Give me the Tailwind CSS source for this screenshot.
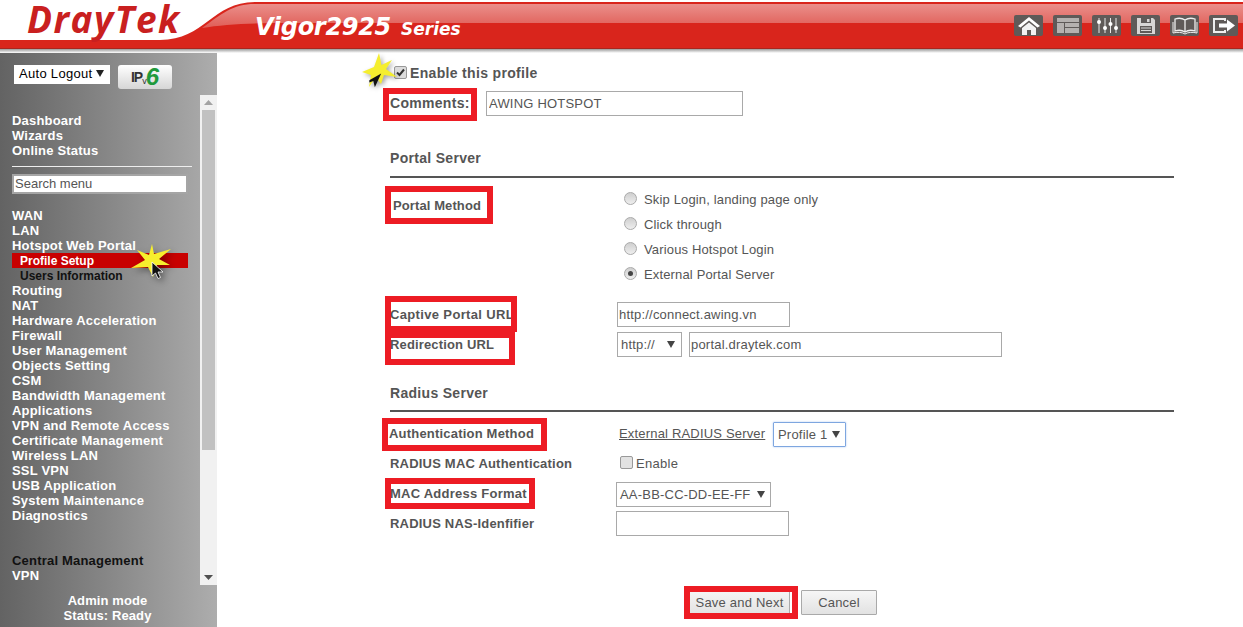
<!DOCTYPE html>
<html><head>
<meta charset="utf-8">
<title>Vigor2925 Series</title>
<script src="https://cdn.jsdelivr.net/npm/@tailwindcss/browser@4"></script>
</head>
<body class="bg-white overflow-hidden font-['Liberation_Sans',Arial,sans-serif]">
<div class="relative w-[1243px] h-[627px] overflow-hidden">

  <!-- header -->
  <header class="relative h-[53px] flex items-start">
    <svg class="absolute left-0 top-0" width="1243" height="53" viewBox="0 0 1243 53">
      <defs>
        <linearGradient id="gloss" x1="0" y1="0" x2="0" y2="1">
          <stop offset="0" stop-color="#ea8f8b"/>
          <stop offset="1" stop-color="#e05d56"/>
        </linearGradient>
        <linearGradient id="shade" x1="0" y1="0" x2="0" y2="1">
          <stop offset="0" stop-color="#9a9a9a"/>
          <stop offset="1" stop-color="#ffffff"/>
        </linearGradient>
      </defs>
      <path d="M0 40 L160 40 C205 40 212 2 255 2 L1243 2 L1243 49 L0 49 Z" fill="#d9251c"/>
      <path d="M202 28 C222 14 232 4 255 4 L1243 4 L1243 23 L290 23 C255 23 225 24 202 28 Z" fill="url(#gloss)"/>
      <rect x="0" y="48" width="1243" height="1" fill="#a8261f"/>
      <rect x="0" y="49" width="1243" height="4" fill="url(#shade)"/>
    </svg>
    <span class="relative ml-[27px] w-[156px] shrink-0 text-[37px] leading-[38px] tracking-[1.5px] font-bold italic text-[#c9201f] font-['Open_Sans',sans-serif]">DrayTek</span>
    <div class="relative ml-[72px] mt-[9px] flex items-baseline text-white font-bold italic font-['DejaVu_Sans',sans-serif]">
      <span class="text-[24px] leading-[36px] tracking-[-0.3px]">Vigor2925</span>
      <span class="ml-[10px] text-[17px] leading-[36px]">Series</span>
    </div>
    <nav class="absolute right-[5px] top-[15px] flex gap-[10px]">
      <a class="w-[29px] h-[21px] rounded-[2px] bg-[#5f5a58] flex items-center justify-center">
        <svg width="24" height="19" viewBox="0 0 24 19"><path d="M12 1 L23 10 L20.5 11.5 L12 4.5 L3.5 11.5 L1 10 Z" fill="#fff"/><path d="M5 12 L12 6.5 L19 12 V19 H14 V14 H10 V19 H5 Z" fill="#f2f2f2"/></svg>
      </a>
      <a class="w-[29px] h-[21px] rounded-[2px] bg-[#5f5a58] flex items-center justify-center">
        <svg width="24" height="17" viewBox="0 0 24 17"><path d="M1 1 H23 V5 H1 Z M1 6 H8 V16 H1 Z M9 6 H23 V10 H9 Z M9 11 H23 V16 H9 Z" fill="#b5b1af"/></svg>
      </a>
      <a class="w-[29px] h-[21px] rounded-[2px] bg-[#5f5a58] flex items-center justify-center">
        <svg width="24" height="17" viewBox="0 0 24 17" fill="#fff"><path d="M3.5 1 h1 v15 h-1 Z M9.5 1 h1 v15 h-1 Z M15 1 h1 v15 h-1 Z M20.5 1 h1 v15 h-1 Z" fill="#e8e8e8"/><circle cx="4" cy="5" r="2"/><circle cx="10" cy="11" r="2"/><circle cx="15.500" cy="7" r="2"/><circle cx="21" cy="11" r="2"/></svg>
      </a>
      <a class="w-[29px] h-[21px] rounded-[2px] bg-[#5f5a58] flex items-center justify-center">
        <svg width="20" height="18" viewBox="0 0 20 18"><path d="M1 1 H17 L19 3 V17 H1 Z" fill="#d8d6d5"/><rect x="5" y="1" width="10" height="5" fill="#5f5a58"/><rect x="11" y="2" width="2.500" height="3" fill="#d8d6d5"/><rect x="4" y="9" width="12" height="7" fill="#5f5a58"/><path d="M5 11 H15 M5 13.500 H15" stroke="#d8d6d5"/></svg>
      </a>
      <a class="w-[29px] h-[21px] rounded-[2px] bg-[#5f5a58] flex items-center justify-center">
        <svg width="26" height="18" viewBox="0 0 26 18" fill="none" stroke="#eee" stroke-width="1.300"><path d="M13 3 C10 1 6 1 3 2 V14 C6 13 10 13 13 15 C16 13 20 13 23 14 V2 C20 1 16 1 13 3 Z M13 3 V15"/><path d="M1 5 V16 C5 15 10 15 13 17 C16 15 21 15 25 16 V5" stroke-width="1"/></svg>
      </a>
      <a class="w-[29px] h-[21px] rounded-[2px] bg-[#5f5a58] flex items-center justify-center">
        <svg width="24" height="17" viewBox="0 0 24 17" fill="none"><path d="M13 4 V2 H2 V15 H13 V13" stroke="#eee" stroke-width="2"/><path d="M7 6.500 H15 V2.500 L23 8.500 L15 14.500 V10.500 H7 Z" fill="#fff"/></svg>
      </a>
    </nav>
  </header>

  <div class="flex h-[574px]">
    <!-- sidebar -->
    <aside class="w-[217px] shrink-0 flex flex-col bg-gradient-to-r from-[#636363] to-[#adadad]">
      <div class="h-[42px] flex items-start pl-[14px] pt-[12px]">
        <div class="relative w-[96px] h-[19px] bg-white text-[13px] tracking-[0.3px] leading-[18px] text-black pl-[5px]">Auto Logout
          <svg class="absolute right-[6px] top-[5px]" width="8" height="7" viewBox="0 0 8 7"><path d="M0 0 H8 L4 7 Z" fill="#222"/></svg>
        </div>
        <div class="ml-[8px] w-[54px] h-[24px] rounded-[3px] bg-gradient-to-b from-white to-[#d6d6d6] flex items-center justify-center">
          <span class="text-[14px] font-bold text-[#333] tracking-[-1px]">IP<sub class="text-[9px] font-normal">v</sub></span>
          <span class="text-[24px] leading-[24px] font-bold italic text-[#1f9a3c]">6</span>
        </div>
      </div>
      <div class="relative flex-1 min-h-0 flex">
        <div class="w-[200px] pl-[12px] pt-[18px] text-[13px] leading-[15px] font-bold text-white tracking-[0.2px]">
          <div>Dashboard</div>
          <div>Wizards</div>
          <div>Online Status</div>
          <div class="mt-[8px] w-[180px] border-t border-[#eee]"></div>
          <input class="block mt-[7px] w-[176px] h-[20px] bg-white border-[2px] border-[#a5a5a5] text-[13px] leading-[14px] pb-[2px] font-normal tracking-normal text-[#444] px-[1px] placeholder:text-[#555]" placeholder="Search menu">
          <div class="mt-[14px]">WAN</div>
          <div>LAN</div>
          <div>Hotspot Web Portal</div>
          <div class="w-[176px] h-[15px] bg-[#c80000] pl-[8px] pt-[1px] leading-[14px] text-[12px] tracking-normal">Profile Setup</div>
          <div class="h-[15px] pl-[8px] pt-[1px] leading-[14px] text-[#111] text-[12px] tracking-normal">Users Information</div>
          <div>Routing</div>
          <div>NAT</div>
          <div>Hardware Acceleration</div>
          <div>Firewall</div>
          <div>User Management</div>
          <div>Objects Setting</div>
          <div>CSM</div>
          <div>Bandwidth Management</div>
          <div>Applications</div>
          <div>VPN and Remote Access</div>
          <div>Certificate Management</div>
          <div>Wireless LAN</div>
          <div>SSL VPN</div>
          <div>USB Application</div>
          <div>System Maintenance</div>
          <div>Diagnostics</div>
          <div class="mt-[30px] text-[#111]">Central Management</div>
          <div>VPN</div>
        </div>
        <div class="w-[17px] h-full bg-[#f1f1f1] flex flex-col items-center justify-between py-[5px]">
          <svg width="9" height="5" viewBox="0 0 9 5"><path d="M0 5 L4.500 0 L9 5 Z" fill="#a3a3a3"/></svg>
          <svg width="9" height="5" viewBox="0 0 9 5"><path d="M0 0 L4.500 5 L9 0 Z" fill="#505050"/></svg>
        </div>
        <div class="absolute left-[202px] top-[15px] w-[13px] h-[340px] bg-[#c1c1c1]"></div>
      </div>
      <div class="h-[42px] pt-[8px] pr-[2px] text-center text-[13px] leading-[15px] font-bold text-white tracking-[0.1px]">
        <div>Admin mode</div>
        <div>Status: Ready</div>
      </div>
    </aside>

    <!-- form -->
    <main class="flex-1 pl-[173px] text-[13px] text-[#555]">
      <div class="w-[784px]">
        <div class="h-[35px] pt-[5px] flex items-center text-[14px] font-bold tracking-[0.33px]">
          <div class="ml-[4px] mb-[1px] w-[13px] h-[13px] rounded-[2px] border border-[#999] bg-[#dcdcdc] flex items-center justify-center">
            <svg width="11" height="11" viewBox="0 0 11 11"><path d="M2 5.500 L4.500 8 L9 2.500" fill="none" stroke="#333" stroke-width="2"/></svg>
          </div>
          <span class="ml-[3px]">Enable this profile</span>
        </div>
        <div class="h-[30px] flex items-center">
          <span class="w-[96px] text-[14px] font-bold tracking-[0.3px]">Comments:</span>
          <input class="w-[257px] h-[25px] border border-[#a9a9a9] text-[13px] tracking-[0.2px] text-[#555] px-[2px]" value="AWING HOTSPOT">
        </div>

        <h3 class="mt-[25px] h-[30px] leading-[30px] text-[14px] font-bold tracking-[0.3px]">Portal Server</h3>
        <div class="mt-[3px] h-[2px] bg-[#555]"></div>

        <div class="mt-[9px] flex font-bold">
          <div class="w-[227px] h-[38px] pl-[3px] leading-[38px] tracking-[0.1px]">Portal Method</div>
          <div class="font-normal tracking-[0.15px]">
            <div class="h-[25px] flex items-center ml-[7px]"><span class="mb-[2px] w-[13px] h-[13px] rounded-full border border-[#aaa] bg-gradient-to-b from-[#cfcfcf] to-[#eee]"></span><span class="ml-[7px]">Skip Login, landing page only</span></div>
            <div class="h-[25px] flex items-center ml-[7px]"><span class="mb-[2px] w-[13px] h-[13px] rounded-full border border-[#aaa] bg-gradient-to-b from-[#cfcfcf] to-[#eee]"></span><span class="ml-[7px]">Click through</span></div>
            <div class="h-[25px] flex items-center ml-[7px]"><span class="mb-[2px] w-[13px] h-[13px] rounded-full border border-[#aaa] bg-gradient-to-b from-[#cfcfcf] to-[#eee]"></span><span class="ml-[7px]">Various Hotspot Login</span></div>
            <div class="h-[25px] flex items-center ml-[7px]"><span class="mb-[2px] w-[13px] h-[13px] rounded-full border border-[#aaa] bg-gradient-to-b from-[#cfcfcf] to-[#eee] flex items-center justify-center"><span class="w-[5px] h-[5px] rounded-full bg-[#444]"></span></span><span class="ml-[7px]">External Portal Server</span></div>
          </div>
        </div>

        <div class="mt-[12px] h-[30px] flex items-center">
          <span class="w-[227px] pt-[1px] font-bold tracking-[0.35px]">Captive Portal URL</span>
          <input class="w-[173px] h-[25px] border border-[#a9a9a9] text-[13px] tracking-[0.2px] text-[#555] px-[1px]" value="http://connect.awing.vn">
        </div>
        <div class="h-[30px] flex items-center">
          <span class="w-[227px] pt-[1px] font-bold tracking-[0.15px]">Redirection URL</span>
          <div class="relative w-[65px] h-[25px] border border-[#a9a9a9] text-[13px] tracking-[0.2px] leading-[23px] pl-[3px]">http://
            <svg class="absolute right-[6px] top-[8px]" width="8" height="7" viewBox="0 0 8 7"><path d="M0 0 H8 L4 7 Z" fill="#444"/></svg>
          </div>
          <input class="ml-[7px] w-[313px] h-[25px] border border-[#a9a9a9] text-[13px] tracking-[0.2px] text-[#555] px-[1px]" value="portal.draytek.com">
        </div>

        <h3 class="mt-[19px] h-[30px] leading-[30px] text-[14px] font-bold tracking-[0.3px]">Radius Server</h3>
        <div class="mt-[2px] h-[2px] bg-[#555]"></div>

        <div class="mt-[7px] h-[30px] flex items-center">
          <span class="w-[229px] -ml-[1px] mr-[1px] font-bold tracking-[0.2px]">Authentication Method</span>
          <a class="w-[146px] underline tracking-[0.18px] whitespace-nowrap">External RADIUS Server</a>
          <div class="relative ml-[8px] w-[73px] h-[25px] rounded-[1px] border border-[#7ea6e0] shadow-[0_0_2px_#a9c4ee] tracking-[0.2px] leading-[23px] pl-[4px]">Profile 1
            <svg class="absolute right-[5px] top-[8px]" width="8" height="7" viewBox="0 0 8 7"><path d="M0 0 H8 L4 7 Z" fill="#444"/></svg>
          </div>
        </div>
        <div class="h-[30px] flex items-center">
          <span class="w-[230px] font-bold tracking-[0.2px]">RADIUS MAC Authentication</span>
          <span class="mb-[3px] w-[13px] h-[13px] rounded-[2px] border border-[#999] bg-[#e2e2e2]"></span>
          <span class="ml-[3px] mb-[1px] tracking-[0.3px]">Enable</span>
        </div>
        <div class="h-[30px] flex items-center">
          <span class="w-[226px] font-bold tracking-[0.25px]">MAC Address Format</span>
          <div class="relative w-[155px] h-[25px] border border-[#a9a9a9] tracking-[0.2px] leading-[23px] pl-[3px]">AA-BB-CC-DD-EE-FF
            <svg class="absolute right-[5px] top-[8px]" width="8" height="7" viewBox="0 0 8 7"><path d="M0 0 H8 L4 7 Z" fill="#444"/></svg>
          </div>
        </div>
        <div class="h-[30px] flex items-center">
          <span class="w-[226px] font-bold tracking-[0.2px]">RADIUS NAS-Idenfifier</span>
          <input class="mb-[1px] w-[173px] h-[25px] border border-[#a9a9a9]">
        </div>

        <div class="mt-[51px] flex pl-[300px] tracking-[0.2px]">
          <button class="w-[100px] h-[25px] bg-gradient-to-b from-[#f6f6f6] to-[#e2e2e2] text-[#555] border-r border-[#aaa]">Save and Next</button>
          <button class="ml-[11px] w-[76px] h-[25px] rounded-[1px] border border-[#a9a9a9] bg-gradient-to-b from-[#f6f6f6] to-[#e2e2e2] text-[#555]">Cancel</button>
        </div>
      </div>
    </main>
  </div>

  <!-- red annotation boxes drawn on top of the screenshot -->
  <div class="absolute left-[383px] top-[88px] w-[94px] h-[33px] border-[6px] border-[#ed1c24]"></div>
  <div class="absolute left-[385px] top-[186px] w-[108px] h-[38px] border-[6px] border-[#ed1c24]"></div>
  <div class="absolute left-[385px] top-[296px] w-[132px] h-[36px] border-[6px] border-[#ed1c24]"></div>
  <div class="absolute left-[385px] top-[332px] w-[130px] h-[33px] border-[6px] border-[#ed1c24]"></div>
  <div class="absolute left-[382px] top-[418px] w-[165px] h-[33px] border-[6px] border-[#ed1c24]"></div>
  <div class="absolute left-[385px] top-[478px] w-[150px] h-[31px] border-[6px] border-[#ed1c24]"></div>
  <div class="absolute left-[684px] top-[586px] w-[114px] h-[33px] border-[6px] border-[#ed1c24]"></div>

  <!-- click markers -->
  <svg class="absolute left-[361px] top-[52px] drop-shadow-[2px_2px_2px_rgba(0,0,0,0.35)]" width="38" height="42" viewBox="0 0 38 42">
    <path d="M18 1 L20.500 13 L31 8 L25 17 L36 25 L23 23 L20 32 L15 25 L8 35 L10 23 L1 20 L13 15 Z" fill="#f5ee2e"/>
    <path d="M17 20 V35 L13 30 L10 33 L9 31 L12 27 L17 20 Z" transform="rotate(25 15 28)" fill="#111"/>
  </svg>
  <svg class="absolute left-[128px] top-[242px] drop-shadow-[3px_3px_3px_rgba(0,0,0,0.4)]" width="46" height="40" viewBox="0 0 46 40">
    <path d="M24 2 L26 12 L43 7 L31 17 L42 23 L29 23 L25 35 L20 25 L3 26 L17 18 L9 8 L21 13 Z" fill="#f7ef2d"/>
    <path d="M24 20 V34 L27.500 31 L30 36.500 L32.500 35.500 L30 30 L35 30 Z" fill="#111" stroke="#fff" stroke-width="0.800"/>
  </svg>
</div>
</body></html>
